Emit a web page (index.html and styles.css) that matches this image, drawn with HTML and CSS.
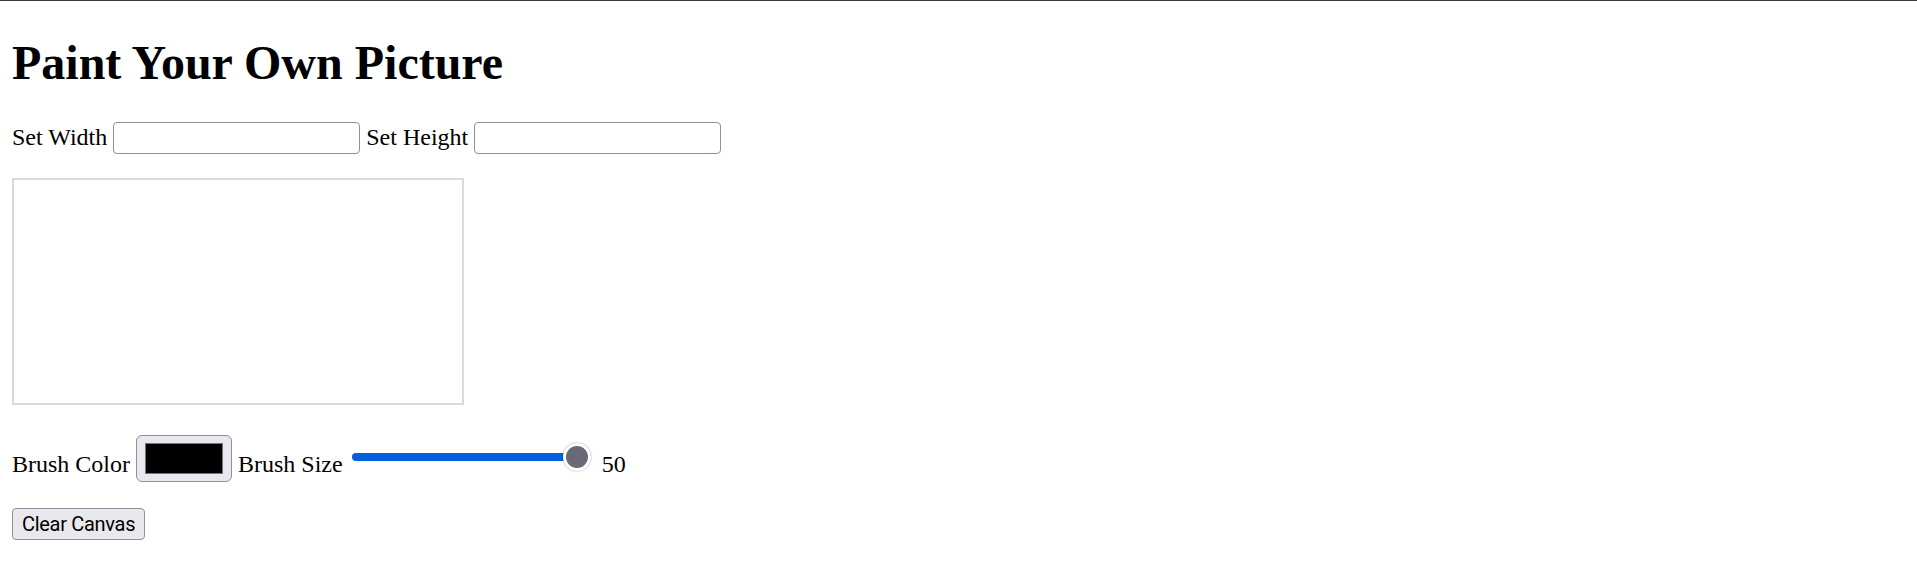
FILE: index.html
```html
<!DOCTYPE html>
<html lang="en">
<head>
<meta charset="utf-8">
<title>Paint Your Own Picture</title>
<link rel="stylesheet" href="styles.css">
</head>
<body>
  <h1 class="title">Paint Your Own Picture</h1>
  <div class="size-row">
    <label class="label" for="w">Set Width</label>
    <input class="field" id="w" type="text">
    <label class="label" for="h">Set Height</label>
    <input class="field" id="h" type="text">
  </div>
  <canvas class="board" width="300" height="150"></canvas>
  <div class="brush-row">
    <label class="label brush-label" for="c">Brush Color</label>
    <input class="swatch" id="c" type="color" value="#000000">
    <label class="label brush-label" for="s">Brush Size</label>
    <input class="slider" id="s" type="range" min="1" max="50" value="50">
    <span class="label brush-label">50</span>
  </div>
  <button class="btn" type="button">Clear Canvas</button>
</body>
</html>
```
FILE: styles.css
```css
html, body {
  background: #ffffff;
}
body {
  margin: 0;
  padding: 0 12px 12px;
  border-top: 1px solid #3a3a3a;
  font-family: "Liberation Serif", "Times New Roman", serif;
  font-size: 24px;
  color: #000000;
}
.title {
  margin: 34px 0 0;
  font-size: 48px;
  line-height: 55px;
  font-weight: bold;
}
.size-row {
  display: flex;
  align-items: center;
  gap: 6px;
  margin-top: 31.7px;
}
.label {
  line-height: 1.15;
  white-space: nowrap;
}
.field {
  box-sizing: border-box;
  width: 247px;
  height: 32px;
  margin: 0;
  padding: 2px 4px;
  border: 1px solid #8f8f9d;
  border-radius: 4px;
  background: #ffffff;
  font-size: 20px;
}
.board {
  display: block;
  box-sizing: border-box;
  width: 452px;
  height: 227px;
  margin-top: 24.3px;
  border: 2px solid #dadada;
}
.brush-row {
  display: flex;
  align-items: center;
  gap: 6px;
  margin-top: 30.3px;
}
.brush-label {
  padding-top: 12px;
}
.swatch {
  -webkit-appearance: none;
  appearance: none;
  box-sizing: border-box;
  width: 96px;
  height: 47px;
  margin: 0;
  padding: 7px 8px;
  border: 1px solid #8f8f9d;
  border-radius: 6px;
  background: #e9e9ed;
}
.swatch::-webkit-color-swatch-wrapper {
  padding: 0;
}
.swatch::-webkit-color-swatch {
  border: 1px solid #76757c;
  border-radius: 0;
}
.slider {
  -webkit-appearance: none;
  appearance: none;
  width: 239px;
  height: 28px;
  margin: 0 5px 4px 3px;
  padding: 0;
  background: transparent;
}
.slider::-webkit-slider-runnable-track {
  height: 8px;
  border-radius: 4px;
  background: #0060df;
}
.slider::-webkit-slider-thumb {
  -webkit-appearance: none;
  appearance: none;
  box-sizing: border-box;
  width: 28px;
  height: 28px;
  margin-top: -10px;
  border: 3px solid #ffffff;
  border-radius: 50%;
  background: #6a6978;
  box-shadow: 0 0 2px rgba(0, 0, 0, 0.4);
}
.btn {
  display: block;
  box-sizing: border-box;
  height: 31.6px;
  margin-top: 25.7px;
  padding: 0 9px;
  border: 1px solid #8f8f9d;
  border-radius: 4px;
  background: #e9e9ed;
  color: #000000;
  font-family: Roboto, "Liberation Sans", sans-serif;
  font-size: 20px;
  letter-spacing: -0.3px;
}
```
